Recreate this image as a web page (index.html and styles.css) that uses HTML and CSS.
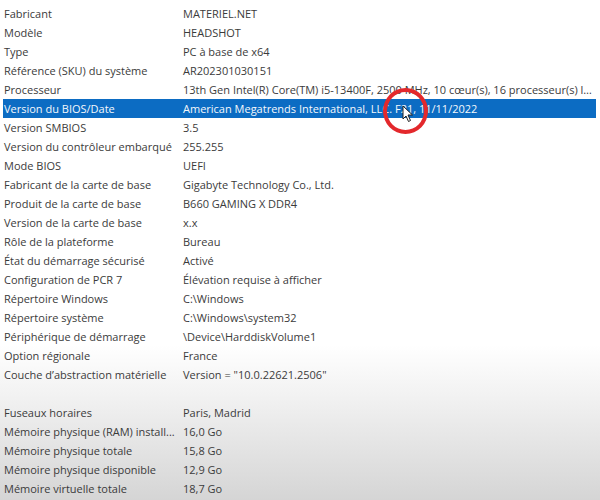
FILE: index.html
```html
<!DOCTYPE html>
<html lang="fr">
<head>
<meta charset="utf-8">
<link rel="stylesheet" href="styles.css">
</head>
<body>
<div class="list">
  <div class="row"><span class="k">Fabricant</span><span class="v">MATERIEL.NET</span></div>
  <div class="row"><span class="k">Modèle</span><span class="v">HEADSHOT</span></div>
  <div class="row"><span class="k">Type</span><span class="v">PC à base de x64</span></div>
  <div class="row"><span class="k">Référence (SKU) du système</span><span class="v">AR202301030151</span></div>
  <div class="row"><span class="k">Processeur</span><span class="v">13th Gen Intel(R) Core(TM) i5-13400F, 2500 MHz, 10 cœur(s), 16 processeur(s) logique(s)</span></div>
  <div class="row sel"><span class="k">Version du BIOS/Date</span><span class="v">American Megatrends International, LLC. F21, 11/11/2022</span></div>
  <div class="row"><span class="k">Version SMBIOS</span><span class="v">3.5</span></div>
  <div class="row"><span class="k">Version du contrôleur embarqué</span><span class="v">255.255</span></div>
  <div class="row"><span class="k">Mode BIOS</span><span class="v">UEFI</span></div>
  <div class="row"><span class="k">Fabricant de la carte de base</span><span class="v">Gigabyte Technology Co., Ltd.</span></div>
  <div class="row"><span class="k">Produit de la carte de base</span><span class="v">B660 GAMING X DDR4</span></div>
  <div class="row"><span class="k">Version de la carte de base</span><span class="v">x.x</span></div>
  <div class="row"><span class="k">Rôle de la plateforme</span><span class="v">Bureau</span></div>
  <div class="row"><span class="k">État du démarrage sécurisé</span><span class="v">Activé</span></div>
  <div class="row"><span class="k">Configuration de PCR 7</span><span class="v">Élévation requise à afficher</span></div>
  <div class="row"><span class="k">Répertoire Windows</span><span class="v">C:\Windows</span></div>
  <div class="row"><span class="k">Répertoire système</span><span class="v">C:\Windows\system32</span></div>
  <div class="row"><span class="k">Périphérique de démarrage</span><span class="v">\Device\HarddiskVolume1</span></div>
  <div class="row"><span class="k">Option régionale</span><span class="v">France</span></div>
  <div class="row"><span class="k">Couche d’abstraction matérielle</span><span class="v">Version = "10.0.22621.2506"</span></div>
  <div class="row"><span class="k"></span><span class="v"></span></div>
  <div class="row"><span class="k">Fuseaux horaires</span><span class="v">Paris, Madrid</span></div>
  <div class="row"><span class="k">Mémoire physique (RAM) install...</span><span class="v">16,0 Go</span></div>
  <div class="row"><span class="k">Mémoire physique totale</span><span class="v">15,8 Go</span></div>
  <div class="row"><span class="k">Mémoire physique disponible</span><span class="v">12,9 Go</span></div>
  <div class="row"><span class="k">Mémoire virtuelle totale</span><span class="v">18,7 Go</span></div>
</div>
<div class="ring"></div>
<svg class="cursor" width="12" height="18" viewBox="0 0 12 18"><path d="M1 1 L1 14 L4 11 L6.5 16.5 L8.5 15.5 L6 10 L10.5 10 Z" fill="#fff" stroke="#222" stroke-width="1"/></svg>
</body>
</html>
```
FILE: styles.css
```css
html, body {
  margin: 0;
  padding: 0;
  width: 600px;
  height: 500px;
  overflow: hidden;
}
body {
  position: relative;
  background: linear-gradient(to bottom, #ffffff 0, #ffffff 345px, #f2f2f2 395px, #d5d5d5 500px);
  font-family: "Open Sans", "Noto Sans", sans-serif;
  font-size: 11px;
  color: #3b3b3b;
}
.list {
  padding-top: 3.5px;
}
.row {
  display: grid;
  grid-template-columns: 179px 414px;
  height: 19px;
  line-height: 19px;
  padding-left: 3px;
}
.k {
  padding-left: 1px;
  white-space: nowrap;
  overflow: hidden;
}
.v {
  white-space: nowrap;
  overflow: hidden;
  text-overflow: ellipsis;
  padding-left: 1px;
}
.sel {
  color: #f4f8fc;
}
.sel .k, .sel .v {
  background: #0c6cc3;
}
.ring {
  position: absolute;
  left: 383px;
  top: 88px;
  width: 37px;
  height: 38px;
  border: 4px solid #e3282c;
  border-radius: 50%;
}
.cursor {
  position: absolute;
  left: 402px;
  top: 105px;
}
```
